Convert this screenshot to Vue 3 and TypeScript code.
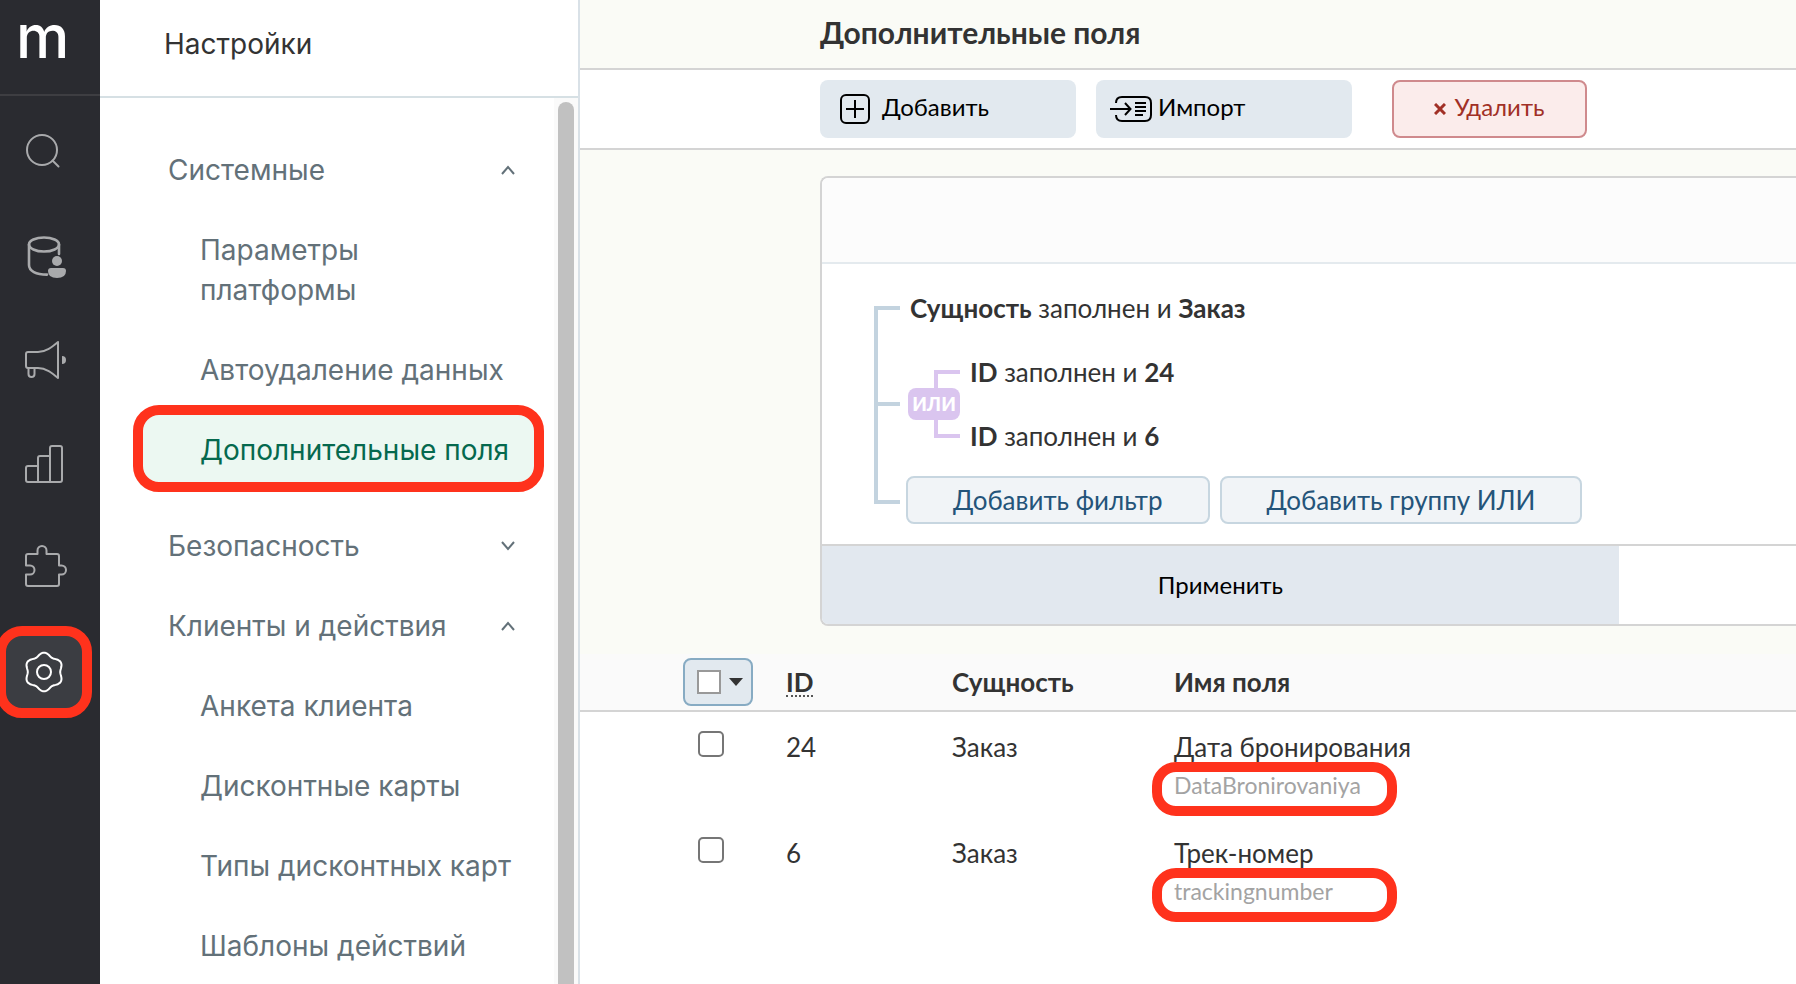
<script setup lang="ts">
import { ref } from 'vue'

interface NavGroup {
  title: string
  open: boolean
  items: string[]
}

interface FieldRow {
  id: number
  entity: string
  name: string
  code: string
}

const groups = ref<NavGroup[]>([
  { title: 'Системные', open: true, items: ['Параметры платформы', 'Автоудаление данных', 'Дополнительные поля'] },
  { title: 'Безопасность', open: false, items: [] },
  { title: 'Клиенты и действия', open: true, items: ['Анкета клиента', 'Дисконтные карты', 'Типы дисконтных карт', 'Шаблоны действий'] },
])
const activeItem = 'Дополнительные поля'

const rows: FieldRow[] = [
  { id: 24, entity: 'Заказ', name: 'Дата бронирования', code: 'DataBronirovaniya' },
  { id: 6, entity: 'Заказ', name: 'Трек-номер', code: 'trackingnumber' },
]
const selected = ref<number[]>([])

// Six-lobed outline of the settings gear, centred in a 48px box
const gearPath = (() => {
  const points: string[] = []
  for (let deg = 0; deg < 360; deg += 4) {
    const a = (deg * Math.PI) / 180
    const r = 17.8 - 1.6 * Math.cos(6 * a)
    points.push(`${(24 + r * Math.cos(a)).toFixed(2)} ${(24 + r * Math.sin(a)).toFixed(2)}`)
  }
  return `M${points.join('L')}Z`
})()
</script>

<template>
  <div class="app">
    <nav class="rail" aria-label="Разделы">
      <a class="logo" href="#">m</a>
      <div class="rail-items">
        <button class="rail-btn" type="button" aria-label="Поиск">
          <svg viewBox="0 0 48 48"><circle cx="22" cy="22" r="15" /><path d="M32.5 32.5l6 6" /></svg>
        </button>
        <button class="rail-btn" type="button" aria-label="Данные">
          <svg viewBox="0 0 48 48">
            <g stroke-width="2.6"><ellipse cx="24" cy="12.5" rx="15" ry="7" /><path d="M9 12.5V33c0 6 7 9.6 18 9.6M39 12.5V22" /></g>
            <circle class="solid" cx="37" cy="29" r="5" />
            <path class="solid" d="M31 36h12q3 0 3 3 0 7-9 7t-9-7q0-3 3-3z" />
          </svg>
        </button>
        <button class="rail-btn" type="button" aria-label="Рассылки">
          <svg viewBox="0 0 48 48">
            <path d="M8 16h10c8 0 14-5 20-10v36c-6-5-12-10-20-10H8a2 2 0 0 1-2-2V18a2 2 0 0 1 2-2z" />
            <path d="M8.5 32v6a3 3 0 0 0 6 0v-6" />
            <path class="solid" d="M42 20a4 4 0 0 1 0 8z" />
          </svg>
        </button>
        <button class="rail-btn" type="button" aria-label="Отчёты">
          <svg viewBox="0 0 48 48">
            <path d="M18 42H8a2 2 0 0 1-2-2V28a2 2 0 0 1 2-2h10M18 42V18a2 2 0 0 1 2-2h10M30 42V8a2 2 0 0 1 2-2h8a2 2 0 0 1 2 2v32a2 2 0 0 1-2 2H18" />
          </svg>
        </button>
        <button class="rail-btn" type="button" aria-label="Интеграции">
          <svg viewBox="0 0 48 48">
            <path d="M8 10h9.5V6.5a4.5 4.5 0 0 1 9 0V10H37a2 2 0 0 1 2 2v9.5h2.5a4.5 4.5 0 0 1 0 9H39V40a2 2 0 0 1-2 2H8a2 2 0 0 1-2-2v-9.5h4a4.5 4.5 0 0 0 0-9H6V12a2 2 0 0 1 2-2z" />
          </svg>
        </button>
        <button class="rail-btn current" type="button" aria-label="Настройки">
          <svg viewBox="0 0 48 48"><path :d="gearPath" /><circle cx="24" cy="24" r="7" /></svg>
        </button>
      </div>
    </nav>

    <aside class="sidebar">
      <h2 class="sidebar-title">Настройки</h2>
      <div class="sidebar-body">
        <div class="menu">
          <section v-for="g in groups" :key="g.title" class="group">
            <button class="group-head" type="button" :aria-expanded="g.open" @click="g.open = !g.open">
              <span>{{ g.title }}</span>
              <svg class="chevron" viewBox="0 0 16 16">
                <path :d="g.open ? 'M2 12l6-7 6 7' : 'M2 4l6 7 6-7'" />
              </svg>
            </button>
            <template v-if="g.open">
              <a v-for="item in g.items" :key="item" href="#" class="item" :class="{ active: item === activeItem }">{{ item }}</a>
            </template>
          </section>
        </div>
        <div class="scroll-track"><div class="scroll-thumb"></div></div>
      </div>
    </aside>

    <main class="main">
      <header class="page-head"><h1>Дополнительные поля</h1></header>

      <div class="toolbar">
        <button class="tool" type="button">
          <svg class="plus-icon" viewBox="0 0 30 30"><rect x="1" y="1" width="28" height="28" rx="5" /><path d="M15 6v18M6 15h18" /></svg>
          <span>Добавить</span>
        </button>
        <button class="tool import" type="button">
          <svg class="import-icon" viewBox="0 0 42 26">
            <path d="M6 7c0-4 2-6 6-6h23q6 0 6 6v12q0 6-6 6H12c-4 0-6-2-6-6" />
            <path d="M0 13h20M15 7l5.5 6-5.5 6M25 7h11M25 11h11M25 15h11M25 19h8" />
          </svg>
          <span>Импорт</span>
        </button>
        <button class="delete" type="button">
          <svg class="cross-icon" viewBox="0 0 12 12"><path d="M1 1l10 10M11 1L1 11" /></svg>
          <span>Удалить</span>
        </button>
      </div>

      <div class="filter-area">
        <section class="filter">
          <div class="filter-head"></div>
          <div class="tree">
            <div class="branch first"></div>
            <p class="cond"><b>Сущность</b> заполнен и <b>Заказ</b></p>

            <div class="branch middle"></div>
            <div class="or-group">
              <div class="or-side">
                <div class="or-line top"></div>
                <span class="or-badge">ИЛИ</span>
                <div class="or-line bottom"></div>
              </div>
              <div>
                <p class="cond"><b>ID</b> заполнен и <b>24</b></p>
                <p class="cond"><b>ID</b> заполнен и <b>6</b></p>
              </div>
            </div>

            <div class="branch last"></div>
            <div class="add-row">
              <button class="add" type="button">Добавить фильтр</button>
              <button class="add" type="button">Добавить группу ИЛИ</button>
            </div>
          </div>
          <div class="filter-foot"><button class="apply" type="button">Применить</button></div>
        </section>
      </div>

      <table class="grid">
        <colgroup><col class="c-check" /><col class="c-id" /><col class="c-entity" /><col /></colgroup>
        <thead>
          <tr>
            <th class="check-cell">
              <div class="check-menu">
                <input type="checkbox" aria-label="Выбрать все" />
                <button type="button" aria-label="Варианты выбора"><svg viewBox="0 0 14 8"><path d="M0 0h14L7 8z" /></svg></button>
              </div>
            </th>
            <th><a class="sort" href="#">ID</a></th>
            <th>Сущность</th>
            <th>Имя поля</th>
          </tr>
        </thead>
        <tbody>
          <tr v-for="r in rows" :key="r.id">
            <td class="check-cell"><input v-model="selected" class="row-check" type="checkbox" :value="r.id" :aria-label="r.name" /></td>
            <td>{{ r.id }}</td>
            <td>{{ r.entity }}</td>
            <td>{{ r.name }}<div class="code">{{ r.code }}</div></td>
          </tr>
        </tbody>
      </table>
    </main>
  </div>
</template>

<style>
body {
  margin: 0;
}
</style>

<style scoped>
*,
*::before,
*::after {
  box-sizing: border-box;
}
.app {
  display: flex;
  height: 100vh;
  overflow: hidden;
  background: #fff;
  color: #333;
  font: 26px/38px Lato, "Noto Sans", sans-serif;
}
button {
  font: inherit;
  color: inherit;
  border: 0;
  padding: 0;
  background: none;
  cursor: pointer;
}
a {
  color: inherit;
  text-decoration: none;
}
h1,
h2,
p {
  margin: 0;
}
svg {
  display: block;
  flex: none;
  fill: none;
  stroke: currentColor;
}

/* Icon rail */
.rail {
  flex: 0 0 100px;
  background: #2a2b30;
  color: #a9aaac;
}
.logo {
  display: block;
  height: 96px;
  padding-left: 16px;
  border-bottom: 2px solid #3e3e42;
  color: #fff;
  font: 500 60px/72px Inter, sans-serif;
}
.rail-items {
  display: flex;
  flex-direction: column;
  align-items: flex-start;
  padding-top: 4px;
}
.rail-btn {
  position: relative;
  display: flex;
  align-items: center;
  justify-content: center;
  width: 88px;
  height: 104px;
}
.rail-btn svg {
  position: relative;
  z-index: 1;
  width: 48px;
  height: 48px;
  stroke-width: 2;
  stroke-linecap: round;
  stroke-linejoin: round;
}
.rail-btn .solid {
  fill: currentColor;
  stroke: none;
}
.rail-btn.current {
  color: #fff;
}
.rail-btn.current::before {
  content: "";
  position: absolute;
  inset: 6px -4px;
  border: 10px solid #ff321c;
  border-radius: 26px;
  background: #3b3d42;
}

/* Settings menu */
.sidebar {
  display: flex;
  flex-direction: column;
  flex: 0 0 480px;
  border-right: 2px solid #d9e1e7;
  font: 28px/40px Inter, sans-serif;
  color: #637179;
}
.sidebar-title {
  padding: 24px 64px 32px;
  border-bottom: 2px solid #d6e0e4;
  color: #333;
  font-size: 28px;
  font-weight: 400;
}
.sidebar-body {
  display: flex;
  flex: 1;
  min-height: 0;
}
.menu {
  flex: 1;
  min-width: 0;
  padding: 32px 14px 0 36px;
  overflow: hidden;
}
.group + .group:nth-child(2) {
  margin-top: 16px;
}
.group-head {
  display: flex;
  align-items: center;
  justify-content: space-between;
  width: 100%;
  padding: 20px 24px 20px 32px;
  text-align: left;
}
.chevron {
  width: 16px;
  height: 16px;
  stroke-width: 2;
}
.item {
  position: relative;
  display: block;
  padding: 20px 24px 20px 64px;
  border-radius: 16px;
}
.item.active {
  background: #ecf8f2;
  color: #05694e;
}
.item.active::after {
  content: "";
  position: absolute;
  inset: -5px -4px -2px -3px;
  border: 10px solid #ff321c;
  border-radius: 26px;
}
.scroll-track {
  display: flex;
  flex: 0 0 24px;
  padding: 4px 4px 0;
  background: #fafafa;
}
.scroll-thumb {
  flex: 1;
  border-radius: 8px 8px 0 0;
  background: #c1c1c1;
}

/* Page */
.main {
  flex: 1;
  min-width: 0;
}
.page-head {
  padding: 0 0 4px 240px;
  border-bottom: 2px solid #d4d4d4;
  background: #fafbf6;
}
h1 {
  font-size: 30px;
  line-height: 64px;
}
.toolbar {
  display: flex;
  padding: 10px 0 10px 240px;
  border-bottom: 2px solid #d4d4d4;
  font-size: 24px;
}
.tool {
  display: flex;
  align-items: center;
  gap: 12px;
  width: 256px;
  height: 58px;
  margin-right: 20px;
  padding: 0 20px;
  border-radius: 8px;
  background: #e2e9ef;
  color: #000;
}
.tool.import {
  gap: 6px;
  padding: 0 14px;
}
.tool span,
.delete span {
  padding-bottom: 4px;
}
.tool svg {
  stroke-width: 2;
}
.plus-icon {
  width: 30px;
  height: 30px;
}
.import-icon {
  width: 42px;
  height: 26px;
}
.delete {
  display: flex;
  align-items: center;
  justify-content: center;
  gap: 8px;
  width: 195px;
  height: 58px;
  margin-left: 20px;
  border: 2px solid #cf8a8d;
  border-radius: 8px;
  background: #fbeceb;
  color: #a13026;
}
.cross-icon {
  width: 12px;
  height: 12px;
  stroke-width: 3;
}

/* Filter */
.filter-area {
  padding: 26px 0 28px 240px;
  background: #fafbf6;
}
.filter {
  border: 2px solid #d4d4d4;
  border-right: 0;
  border-radius: 8px 0 0 8px;
  background: #fff;
  overflow: hidden;
}
.filter-head {
  height: 86px;
  border-bottom: 2px solid #e4eaee;
  background: #fcfcfc;
}
.tree {
  display: grid;
  grid-template-columns: 26px 1fr;
  padding: 12px 0 12px 52px;
}
.branch {
  border: 0 solid #c3d3df;
  border-left-width: 4px;
}
.branch.first {
  margin-top: 30px;
  border-top-width: 4px;
}
.branch.middle {
  display: flex;
  align-items: center;
}
.branch.middle::before {
  content: "";
  flex: 1;
  height: 4px;
  background: #c3d3df;
}
.branch.last {
  margin-bottom: 28px;
  border-bottom-width: 4px;
}
.cond {
  padding-left: 10px;
  line-height: 64px;
}
.or-group {
  display: flex;
  padding-left: 8px;
}
.or-side {
  display: flex;
  flex-direction: column;
  justify-content: center;
}
.or-line {
  height: 18px;
  margin-left: 26px;
  border: 0 solid #dac5ef;
  border-left-width: 4px;
}
.or-line.top {
  border-top-width: 4px;
}
.or-line.bottom {
  border-bottom-width: 4px;
}
.or-badge {
  width: 52px;
  border-radius: 8px;
  background: #dac5ef;
  color: #fff;
  font-size: 19px;
  font-weight: 900;
  line-height: 32px;
  text-align: center;
}
.add-row {
  display: flex;
  align-items: center;
  gap: 10px;
  height: 64px;
  padding-left: 6px;
}
.add {
  height: 48px;
  padding: 0 45px;
  border: 2px solid #c7d6e0;
  border-radius: 8px;
  background: #f1f4f7;
  color: #24547a;
}
.filter-foot {
  display: grid;
  grid-template-columns: 9fr 2fr;
  border-top: 2px solid #d4d4d4;
}
.apply {
  height: 78px;
  background: #e2e8ef;
  color: #000;
  font-size: 24px;
}

/* Table */
.grid {
  width: 100%;
  border-spacing: 0;
  table-layout: fixed;
}
.c-check {
  width: 206px;
}
.c-id {
  width: 166px;
}
.c-entity {
  width: 222px;
}
th {
  height: 58px;
  padding: 4px 0;
  border-bottom: 2px solid #d4d4d4;
  background: #fafafa;
  text-align: left;
}
td {
  height: 106px;
  padding: 16px 0 14px;
  vertical-align: top;
}
.check-cell {
  padding-left: 103px;
}
.check-menu {
  display: flex;
  align-items: center;
  gap: 8px;
  width: 70px;
  height: 48px;
  padding-left: 12px;
  border: 2px solid #87abc3;
  border-radius: 8px;
  background: #e2e9ef;
}
.check-menu svg {
  width: 14px;
  height: 8px;
  fill: #333;
  stroke: none;
}
input[type="checkbox"] {
  appearance: none;
  width: 24px;
  height: 24px;
  margin: 0;
  border: 2px solid #999;
  background: #fff;
}
input.row-check {
  display: block;
  width: 26px;
  height: 26px;
  margin: 3px 0 0 15px;
  border-color: #767676;
  border-radius: 5px;
}
.sort {
  display: inline-block;
  border-bottom: 2px dotted #555;
  line-height: 26px;
}
.code {
  position: relative;
  color: #a3a3a3;
  font-size: 23px;
}
.code::after {
  content: "";
  position: absolute;
  top: -4px;
  left: -22px;
  width: 245px;
  height: 54px;
  border: 10px solid #ff321c;
  border-radius: 24px;
}
</style>
